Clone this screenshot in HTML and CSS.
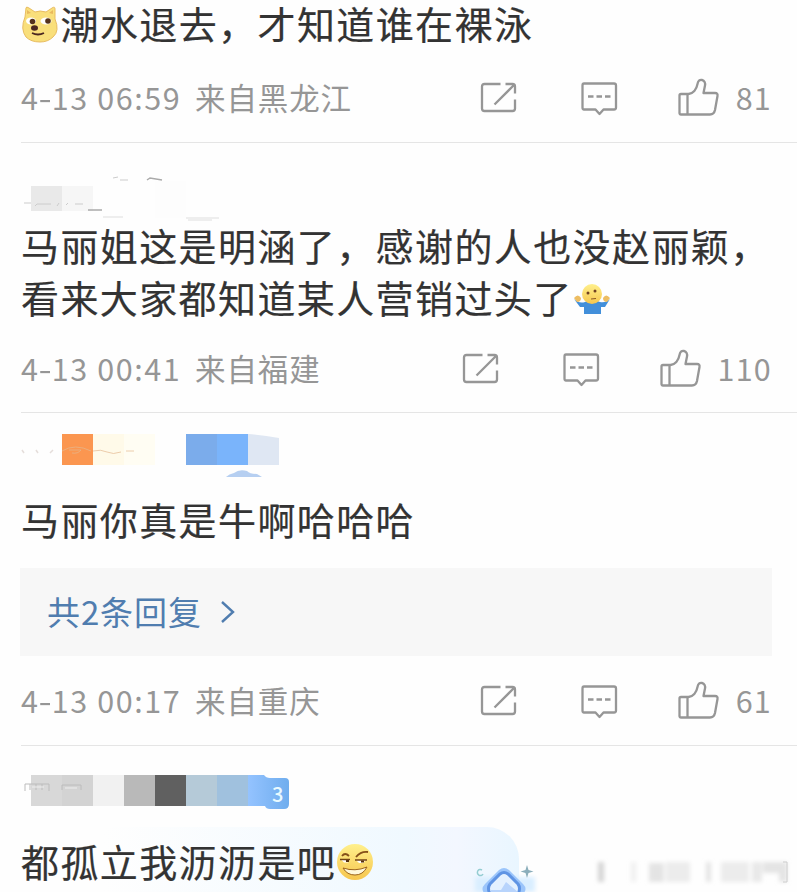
FILE: index.html
```html
<!DOCTYPE html>
<html lang="zh-CN">
<head>
  <meta charset="utf-8" />
  <title>评论</title>
  <meta name="viewport" content="width=device-width, initial-scale=1.0">
  <link rel="stylesheet" href="styles.css">
</head>
<body>
  <svg width="0" height="0" class="defs">
    <defs>
      <symbol id="share" viewBox="0 0 40 40">
        <path d="M21.5 6H5.5Q3 6 3 8.500V30.500Q3 33 5.500 33H33.500Q36 33 36 30.500V21.500M26.500 6H33.500Q36 6 36 8.500V15.500M34.500 7.500L15.500 26.500" />
      </symbol>
      <symbol id="reply" viewBox="0 0 40 40">
        <path d="M5 5.500H35Q37 5.500 37 7.500V29.500Q37 31.500 35 31.500H24.500L20.500 36L16.500 31.500H5Q3.500 31.500 3.500 29.500V7.500Q3.500 5.500 5 5.500Z" />
        <path d="M9 18.500h5.500M17.500 18.500h5.500M26 18.500h5.500" />
      </symbol>
      <symbol id="like" viewBox="0 0 44 44">
        <path d="M4 18H11.500C16 17.500 19.500 13.500 20.500 8C21 5 22.500 3.500 25 4C27.500 4.500 28.500 7 28 9.500L26.500 17H38Q41 17 40.500 20L38 34Q37 38.500 33 38.500H4Q2.500 38.500 2.500 37V19.500Q2.500 18 4 18ZM10.500 18V38.500" />
      </symbol>
      <linearGradient id="gold" x2="0" y2="1">
        <stop offset="0" stop-color="#fff08c" />
        <stop offset="1" stop-color="#f6c64e" />
      </linearGradient>
      <linearGradient id="blueEnd">
        <stop offset="0" stop-color="#94c3ff" />
        <stop offset="1" stop-color="#6fadee" />
      </linearGradient>
      <filter id="soft" x="-20%" y="-20%" width="140%" height="140%"><feGaussianBlur stdDeviation="2" /></filter>
    </defs>
  </svg>

  <main class="feed">
    <article class="comment first">
      <p class="text"><svg class="emoji" viewBox="0 0 38 40"><path d="M4 13L5 4Q5 2 8 4L14 8Q19 6 25 8L31 4Q34 2 34 5L34 15Q39 27 32 33Q27 38 19 38Q10 38 5 33Q-1 25 4 13Z" fill="#f9df7b" stroke="#e8bd62" /><path d="M6 10V6l4 3M32 10V6l-4 3" fill="#e9b85e" /><ellipse cx="10" cy="17" rx="5" ry="3.500" fill="#fff" /><ellipse cx="25" cy="17" rx="5.500" ry="3.500" fill="#fff" /><circle cx="11.500" cy="17.500" r="2.800" fill="#55321d" /><circle cx="27" cy="17" r="2.800" fill="#55321d" /><ellipse cx="13.500" cy="24" rx="3.500" ry="2.800" fill="#4b2720" /><path d="M11 29Q17 32 23 29" fill="none" stroke="#4b2720" stroke-width="1.800" /></svg>潮水退去，才知道谁在裸泳</p>
      <footer class="meta">
        <span class="time">4<i>-</i>13 06:59</span><span class="from">来自黑龙江</span>
        <div class="actions"><svg class="icon"><use href="#share" /></svg><svg class="icon"><use href="#reply" /></svg><svg class="icon thumb"><use href="#like" /></svg><span class="count">81</span></div>
      </footer>
    </article>

    <article class="comment second">
      <svg class="name" viewBox="0 0 300 78">
        <rect x="10" y="43" width="31" height="25" fill="#e9e9e9" /><rect x="41" y="43" width="31" height="25" fill="#f6f6f6" />
        <rect x="134" y="38" width="31" height="37" fill="#fdfdfd" />
        <path d="M3 60h7M14 63l2-2h14M36 63l2-3M45 62l2-2M54 61h8M92 35l5-1M99 37h8" stroke="#ccc" fill="none" />
        <path d="M67 67h14M126 37l3-2 12 2" stroke="#aaa" fill="none" stroke-width="1.500" />
        <path d="M82 74h20M165 75h33M167 77h24" stroke="#eee" fill="none" stroke-width="2" />
      </svg>
      <p class="text">马丽姐这是明涵了，感谢的人也没赵丽颖，<br>看来大家都知道某人营销过头了<svg class="emoji" viewBox="0 0 38 40"><path d="M1 21Q6 26 12 24L19 21L27 24Q33 25 37 21L32 29H28V36H11V29H7Z" fill="#428fda" /><path d="M1 20q4-5 7 0q0 4-4 4ZM37 20q-4-5-7 0q0 4 4 4Z" fill="#edbd62" /><circle cx="19" cy="16" r="10" fill="url(#gold)" /><circle cx="15" cy="15" r="1.500" fill="#704022" /><circle cx="22" cy="13" r="1.500" fill="#704022" /><path d="M18 21l5-.5" stroke="#8a5825" fill="none" /></svg></p>
      <footer class="meta">
        <span class="time">4<i>-</i>13 00:41</span><span class="from">来自福建</span>
        <div class="actions"><svg class="icon"><use href="#share" /></svg><svg class="icon"><use href="#reply" /></svg><svg class="icon thumb"><use href="#like" /></svg><span class="count">110</span></div>
      </footer>
    </article>

    <article class="comment third">
      <svg class="name" viewBox="0 0 300 82">
        <rect x="41" y="21" width="31" height="31" fill="#fb9650" /><rect x="72" y="21" width="31" height="31" fill="#fffae9" /><rect x="103" y="21" width="31" height="31" fill="#fffdf3" />
        <rect x="165" y="21" width="31" height="31" fill="#7baceb" /><rect x="196" y="21" width="31" height="31" fill="#7ab4fb" /><path d="M227 21q15 1 31 4v27h-31Z" fill="#dfe7f3" />
        <path d="M1 37l2 3M15 37l2 3M29 40l3-3" stroke="#e5dedb" fill="none" stroke-width="1.500" />
        <path d="M41 38q13-8 29 0M48 37h12q-3 4-9 3M72 38q8-2 14 1t14 0M105 38h8" stroke="#e4b890" fill="none" opacity=".7" />
        <path d="M205 64q3-3 8-4q5-4 13-2q3 3 10 3l5 3Z" fill="#9dbfec" opacity=".75" />
      </svg>
      <p class="text">马丽你真是牛啊哈哈哈</p>
      <div class="replies"><span>共2条回复</span><svg viewBox="0 0 16 24"><path d="M2 2L13 12L2 22" /></svg></div>
      <footer class="meta">
        <span class="time">4<i>-</i>13 00:17</span><span class="from">来自重庆</span>
        <div class="actions"><svg class="icon"><use href="#share" /></svg><svg class="icon"><use href="#reply" /></svg><svg class="icon thumb"><use href="#like" /></svg><span class="count">61</span></div>
      </footer>
    </article>

    <article class="comment fourth">
      <svg class="name" viewBox="0 0 300 91">
        <rect x="10" y="29" width="31" height="31" fill="#d8d8d8" /><rect x="41" y="29" width="31" height="31" fill="#d3d3d3" /><rect x="72" y="29" width="31" height="31" fill="#f1f1f1" /><rect x="103" y="29" width="31" height="31" fill="#b9b9b9" /><rect x="134" y="29" width="31" height="31" fill="#606060" />
        <rect x="165" y="29" width="31" height="31" fill="#b5cad8" /><rect x="196" y="29" width="31" height="31" fill="#a0c1de" />
        <path d="M227 29h16q2 3 6 3h15q4 0 4 4v22q0 5-5 5h-14q-4 0-5-3h-17Z" fill="url(#blueEnd)" />
        <path d="M4 45v-7h24v7M9 38v6M15 38v6M21 38v6M41 44v-5h19v5" stroke="#bcbcbc" fill="none" /><path d="M11 41h12M44 42h12" stroke="#eee" fill="none" />
        <text x="251" y="56" class="badge">3</text>
      </svg>
      <p class="text">都孤立我沥沥是吧<svg class="emoji" viewBox="0 0 38 40"><circle cx="19" cy="20" r="18" fill="url(#gold)" /><path d="M6 14q3-4 7 0M20 15q5-6 12-5" stroke="#855019" stroke-width="1.800" fill="none" /><path d="M5 17.500h9l-2 3H8ZM20 18h10l-3 3h-4Z" fill="#fff" /><path d="M4 17.500h10M19 18h12" stroke="#714414" stroke-width="1.500" /><path d="M10 19h3M25 19.500h3" stroke="#56300f" stroke-width="2" /><path d="M7 26q12 4 24-1q-4 8-12 8T7 26Z" fill="#fff8d9" stroke="#9c641b" /></svg></p>
    </article>
  </main>

  <div class="banner"></div>
  <svg class="banner-art" viewBox="0 0 340 42">
    <rect x="5" y="27" width="60" height="15" fill="#d9eeff" filter="url(#soft)" />
    <path d="M29 20Q34 16 39 20L53 34Q58 39 53 44H15Q10 39 15 34Z" fill="#9bc5fb" />
    <path d="M30 24Q34 21 38 24L48 34Q51 38 48 44H20Q17 38 20 34Z" fill="#e4f1ff" stroke="#5f94e4" stroke-width="3" />
    <path d="M21 40h10l5-8 12 10H21Z" fill="#b8d4fc" />
    <path d="M12 20a3 3 0 1 0 1 4" stroke="#94cdd2" stroke-width="1.500" fill="none" />
    <path d="M57 15l1.500 5 5 1.500-5 1.500-1.500 5-1.500-5-5-1.500 5-1.500Z" fill="#8baebb" />
    <g filter="url(#soft)" fill="#e4e4e4"><rect x="128" y="12" width="6" height="20" fill="#d5d5d5" /><rect x="161" y="12" width="5" height="20" opacity=".5" /><rect x="179" y="13" width="15" height="19" /><rect x="196" y="12" width="24" height="20" opacity=".7" /><rect x="236" y="12" width="5" height="20" /><rect x="251" y="12" width="28" height="20" opacity=".7" /><rect x="282" y="12" width="10" height="20" opacity=".8" /><path d="M293 12h24v20h-8v-9h-16Z" /></g>
    <path d="M313 12h4v20h-4" stroke="#ccc" fill="none" />
  </svg>
</body>
</html>
```
FILE: styles.css
```css
:root {
  --text: #333;
  --muted: #969696;
  --line: #e5e5e5;
  --link: #507daf;
}
html, body {
  height: 100%;
  margin: 0;
  overflow: hidden;
  background: #fefefe;
  color: var(--text);
  font-family: "Noto Sans CJK SC", sans-serif;
}
body {
  position: relative;
}
.defs {
  position: absolute;
}
.feed {
  position: relative;
  z-index: 1;
  padding-left: 21px;
}
.comment {
  box-sizing: border-box;
  border-bottom: 1px solid var(--line);
}
.text {
  margin: 0;
  font-size: 38px;
  line-height: 52px;
  letter-spacing: 1.4px;
  white-space: nowrap;
  -webkit-text-stroke: 0.2px var(--text);
}
.emoji {
  width: 38px;
  height: 40px;
  margin-right: 1.5px;
  vertical-align: -5px;
}
.name {
  display: block;
  width: 300px;
}
.first {
  height: 143px;
  padding-top: 78px;
}
.first .text {
  margin: -81px 0 29px;
}
.second {
  height: 270px;
}
.second .name {
  height: 78px;
}
.second .text {
  margin: -2px 0 26px;
}
.third {
  height: 333px;
}
.third .name {
  height: 82px;
}
.third .text {
  margin-top: -2px;
}
.fourth {
  border: 0;
}
.fourth .name {
  height: 91px;
}
.fourth .text {
  margin-top: -2px;
}
.badge {
  fill: #e9faff;
  font: 500 20px "Noto Sans CJK SC", sans-serif;
}
.meta {
  display: flex;
  align-items: center;
  height: 40px;
  color: var(--muted);
  font-size: 30.5px;
  line-height: 40px;
  white-space: nowrap;
}
.time {
  width: 174px;
  letter-spacing: 1.6px;
}
.time i {
  display: inline-block;
  font-style: normal;
  transform: scaleX(1.25);
}
.time, .from, .count {
  margin-top: -3px;
}
.from {
  letter-spacing: 0.9px;
}
.actions {
  display: flex;
  align-items: center;
  margin-left: auto;
  padding-right: 25px;
}
.icon {
  width: 40px;
  height: 40px;
  margin-right: 60px;
  fill: none;
  stroke: var(--muted);
  stroke-width: 2.3;
  stroke-linejoin: round;
}
.thumb {
  width: 44px;
  height: 44px;
  margin: 0 15px 0 -2px;
}
.count {
  letter-spacing: 1.2px;
}
.replies {
  display: flex;
  align-items: center;
  gap: 18px;
  box-sizing: border-box;
  width: 752px;
  height: 88px;
  margin: 23px 0 25px -1px;
  padding-left: 27px;
  background: #f7f7f7;
  color: var(--link);
  font-size: 33px;
  letter-spacing: 0.9px;
}
.replies span {
  margin-top: -2px;
}
.replies svg {
  width: 16px;
  height: 24px;
  fill: none;
  stroke: var(--link);
  stroke-width: 2.4;
}
.banner {
  position: absolute;
  left: 0;
  top: 827px;
  width: 519px;
  height: 65px;
  border-radius: 0 32px 0 0;
  background: linear-gradient(90deg, #fefefe 20%, #f0f9ff 78%, #f3f7ff 88%, #e9f6ff);
}
.banner-art {
  position: absolute;
  left: 470px;
  top: 850px;
  width: 340px;
  height: 42px;
}
```
